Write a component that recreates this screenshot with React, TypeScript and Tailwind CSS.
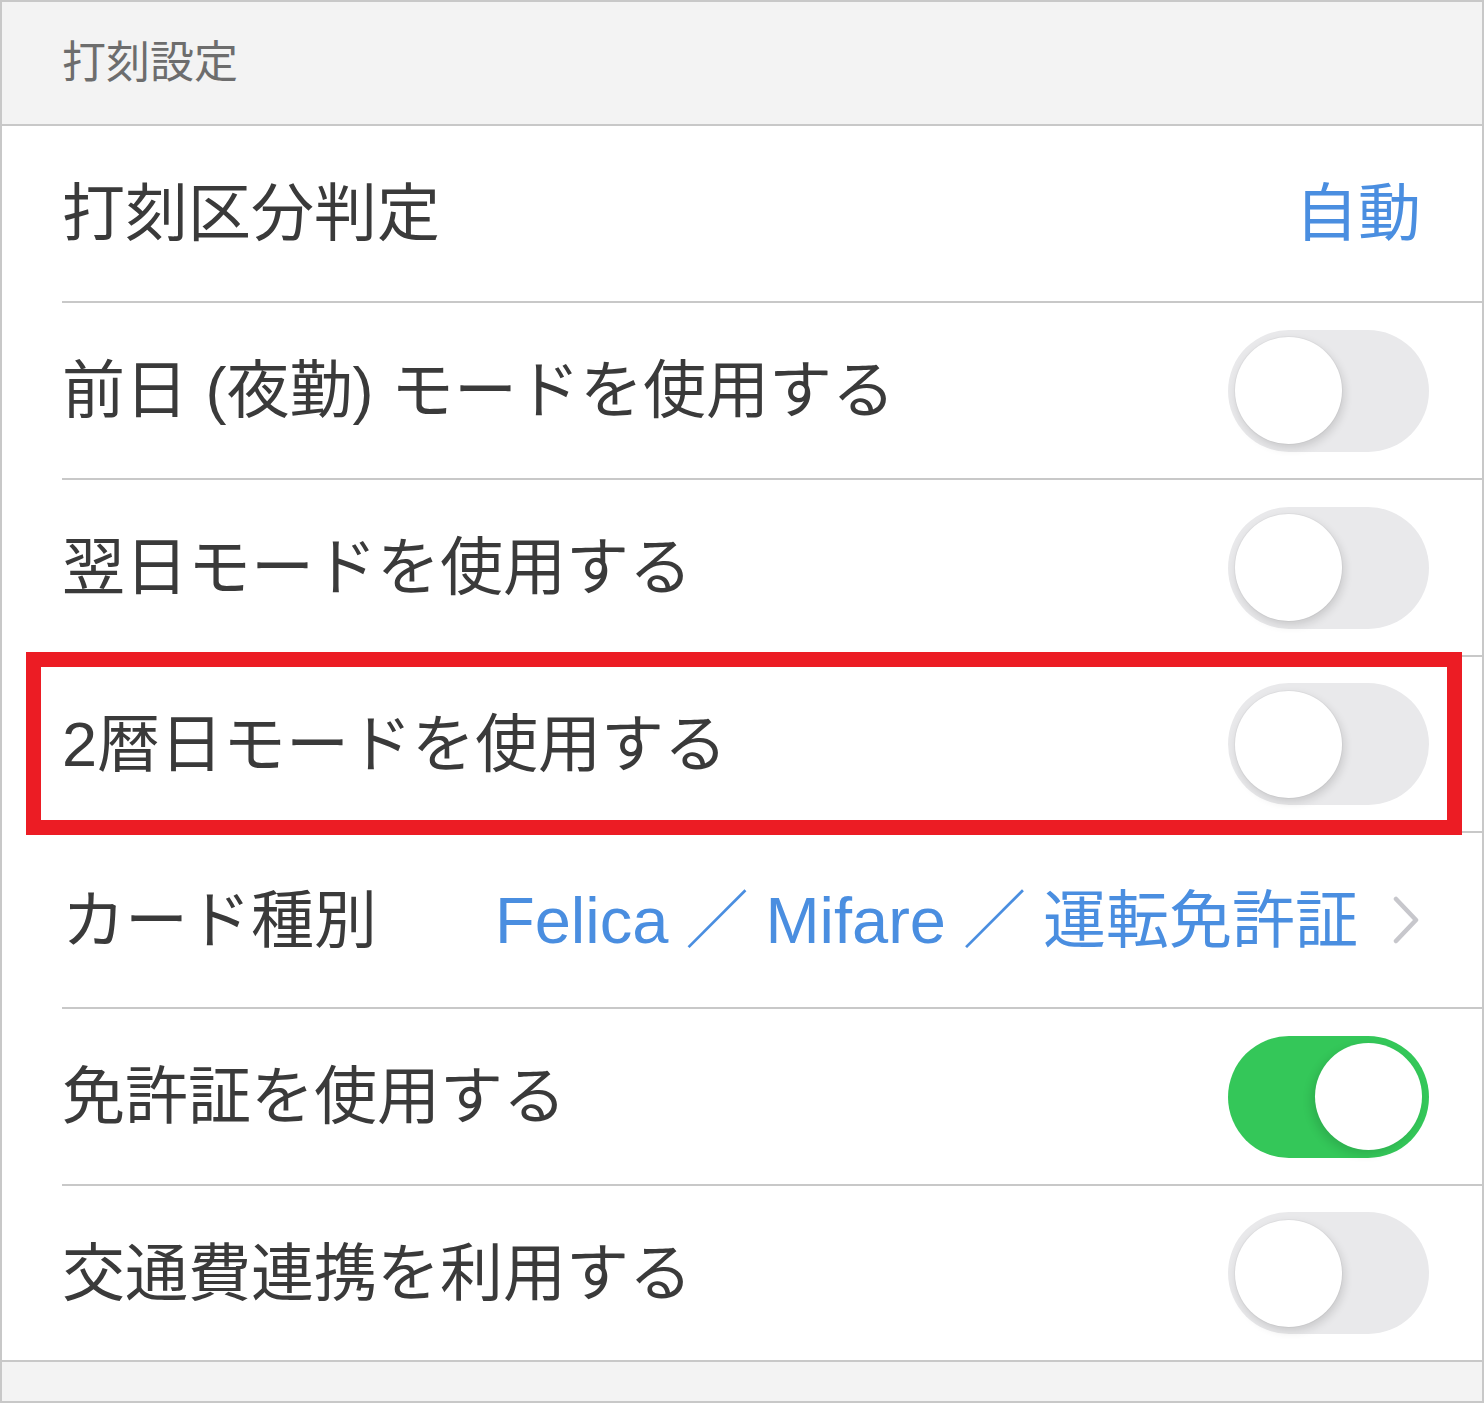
import React from 'react';

const FONT = "font-['Liberation_Sans','Noto_Sans_CJK_JP',sans-serif]";

type Row = {
  label: string;
  height: string;
  kind: 'value' | 'toggle' | 'cards';
  value?: string;
  on?: boolean;
  last?: boolean;
};

const rows: Row[] = [
  { label: '打刻区分判定', height: 'h-[177px]', kind: 'value', value: '自動' },
  { label: '前日 (夜勤) モードを使用する', height: 'h-[177px]', kind: 'toggle', on: false },
  { label: '翌日モードを使用する', height: 'h-[177px]', kind: 'toggle', on: false },
  { label: '2暦日モードを使用する', height: 'h-[176px]', kind: 'toggle', on: false },
  { label: 'カード種別', height: 'h-[176px]', kind: 'cards' },
  { label: '免許証を使用する', height: 'h-[177px]', kind: 'toggle', on: true },
  { label: '交通費連携を利用する', height: 'h-[174px]', kind: 'toggle', on: false, last: true },
];

function Toggle({ on }: { on: boolean }) {
  if (on) {
    return (
      <div className="flex h-[122px] w-[201px] items-center justify-end rounded-full bg-[#34c759] px-[7px]">
        <div className="h-[107px] w-[107px] rounded-full bg-white shadow-[-4px_4px_10px_rgba(0,0,0,0.12)]" />
      </div>
    );
  }
  return (
    <div className="flex h-[122px] w-[201px] items-center rounded-full bg-[#e9e9eb] px-[7px]">
      <div className="h-[107px] w-[107px] rounded-full bg-white shadow-[2px_4px_10px_rgba(0,0,0,0.14),0_0_0_1px_rgba(0,0,0,0.03)]" />
    </div>
  );
}

function Chevron() {
  return (
    <svg width="28" height="48" viewBox="0 0 28 48" className="ml-[34px]">
      <path d="M4 3 L24 24 L4 45" fill="none" stroke="#c7c7cc" strokeWidth="4.5" strokeLinecap="round" strokeLinejoin="round" />
    </svg>
  );
}

export default function App() {
  return (
    <div className={`relative flex h-[1403px] w-[1484px] flex-col border-2 border-[#c8c8c8] bg-white ${FONT}`}>
      <div className="flex h-[124px] shrink-0 items-center border-b-2 border-[#c8c8c8] bg-[#f3f3f3] pl-[60px]">
        <span className="text-[44px] leading-none text-[#6d6d6d]">打刻設定</span>
      </div>

      {rows.map((row) => (
        <div key={row.label} className={`${row.height} shrink-0 pl-[60px]`}>
          <div
            className={`flex h-full items-center justify-between pr-[53px] ${
              row.last ? '' : 'border-b-2 border-[#c8c8c8]'
            }`}
          >
            <span className="whitespace-nowrap text-[63px] leading-none text-[#3a3a3a]">{row.label}</span>
            {row.kind === 'value' && (
              <span className="mr-[8px] text-[63px] leading-none text-[#4a8ee0]">{row.value}</span>
            )}
            {row.kind === 'toggle' && <Toggle on={!!row.on} />}
            {row.kind === 'cards' && (
              <div className="mr-[9px] flex items-center text-[63px] leading-none text-[#4a8ee0]">
                <span className="text-[65px]">Felica</span>
                <span className="mx-[17px]">／</span>
                <span className="text-[65px]">Mifare</span>
                <span className="mx-[17px]">／</span>
                <span>運転免許証</span>
                <Chevron />
              </div>
            )}
          </div>
        </div>
      ))}

      <div className="flex-1 border-t-2 border-[#c8c8c8] bg-[#f3f3f3]" />

      <div className="pointer-events-none absolute left-[24px] top-[650px] h-[183px] w-[1436px] border-[15px] border-[#ec1c24]" />
    </div>
  );
}
